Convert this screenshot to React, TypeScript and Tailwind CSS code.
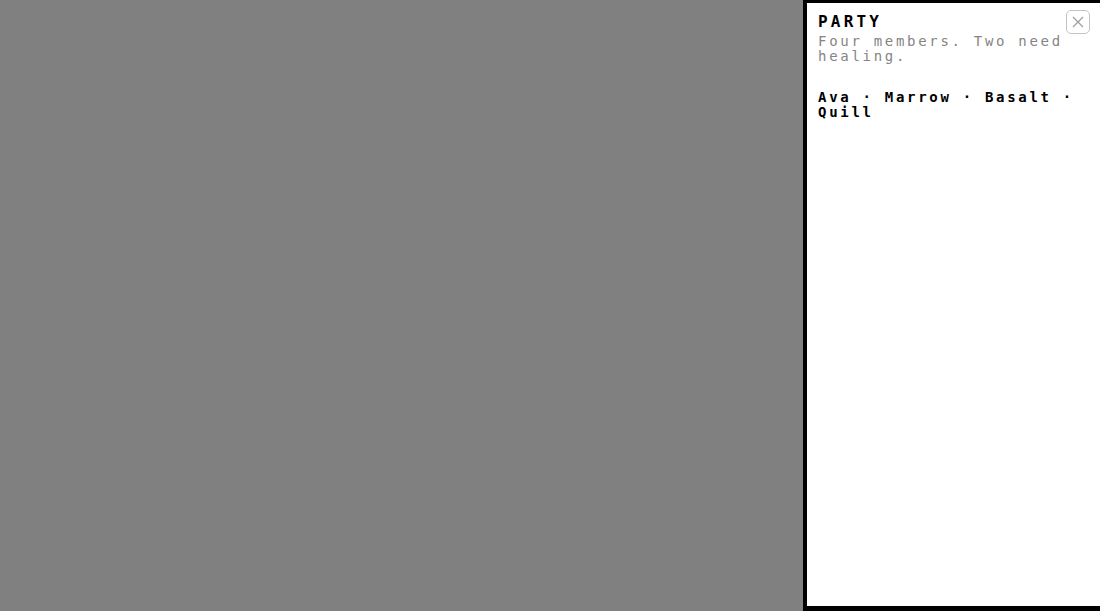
import React from 'react';

const FONT = '"DejaVu Sans Mono", "Liberation Mono", monospace';

export default function App() {
  const members = ['Ava', 'Marrow', 'Basalt', 'Quill'];

  return (
    <div className="relative w-full h-[611px] bg-[#808080] overflow-hidden" style={{ fontFamily: FONT }}>
      <aside className="absolute top-0 right-0 bottom-0 w-[297px] bg-white border-l-4 border-t-[3px] border-b-[5px] border-black">
        <div className="pl-[11px] pr-[10px] pt-[7px]">
          <div className="flex items-start justify-between">
            <h2 className="text-[16px] leading-[20px] font-bold tracking-[3.2px] text-black mt-[2px]">PARTY</h2>
            <button className="w-[24px] h-[24px] rounded-[5px] border border-[#c4c4c4] flex items-center justify-center text-[#9a9a9a]">
              <svg width="14" height="14" viewBox="0 0 14 14" fill="none" stroke="currentColor" strokeWidth="1.1">
                <path d="M2 2 L12 12 M12 2 L2 12" />
              </svg>
            </button>
          </div>
          <p className="mt-0 text-[14px] leading-[15px] tracking-[2.7px] text-[#858585] pr-[8px]">
            Four members. Two need healing.
          </p>
          <p className="mt-[26px] text-[14px] leading-[15px] tracking-[2.7px] font-bold text-black pr-[8px]">
            {members.join(' · ')}
          </p>
        </div>
      </aside>
    </div>
  );
}
